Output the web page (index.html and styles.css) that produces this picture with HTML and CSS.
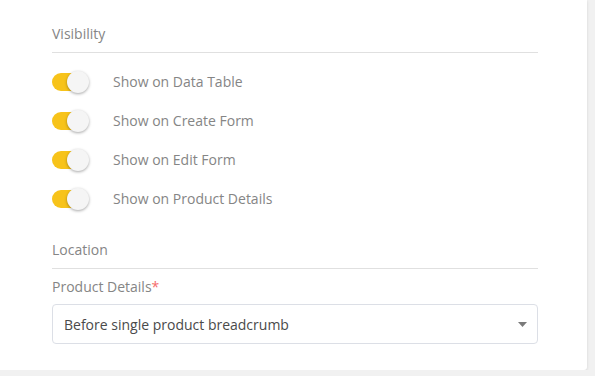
FILE: index.html
```html
<!DOCTYPE html>
<html lang="en">
<head>
    <meta charset="UTF-8">
    <title>Field settings</title>
    <link rel="stylesheet" href="styles.css">
</head>
<body>
    <div class="card">
        <h3 class="section-title">Visibility</h3>
        <div class="toggle-list">
            <label class="toggle-row">
                <span class="switch"><span class="knob"></span></span>
                <span class="toggle-label">Show on Data Table</span>
            </label>
            <label class="toggle-row">
                <span class="switch"><span class="knob"></span></span>
                <span class="toggle-label">Show on Create Form</span>
            </label>
            <label class="toggle-row">
                <span class="switch"><span class="knob"></span></span>
                <span class="toggle-label">Show on Edit Form</span>
            </label>
            <label class="toggle-row">
                <span class="switch"><span class="knob"></span></span>
                <span class="toggle-label">Show on Product Details</span>
            </label>
        </div>

        <h3 class="section-title location">Location</h3>
        <div class="field">
            <div class="field-label">Product Details<span class="required">*</span></div>
            <div class="select">
                <span>Before single product breadcrumb</span>
                <svg class="caret" width="9" height="5" viewBox="0 0 9 5"><path d="M0 0h9L4.5 5z" fill="#7a7a7a"/></svg>
            </div>
        </div>
    </div>
</body>
</html>
```

FILE: styles.css
```css
body {
    margin: 0;
    background-color: #f1f1f1;
    font-family: "Open Sans", "Liberation Sans", sans-serif;
    font-size: 14px;
}

.card {
    width: 587px;
    box-sizing: border-box;
    background-color: #fff;
    padding: 24px 49px 26px 52px;
    box-shadow: 0 1px 3px rgba(0, 0, 0, 0.12);
    border-radius: 0 0 3px 0;
}

/* section headings with a rule under them */
.section-title {
    margin: 0;
    font-size: 14px;
    font-weight: normal;
    line-height: 20px;
    color: #858585;
    padding-bottom: 8px;
    border-bottom: 1px solid #e0e0e0;
}
.section-title.location { margin-top: 30px; }

.toggle-list {
    display: flex;
    flex-direction: column;
    gap: 17px;
    margin-top: 18px;
}
.toggle-row {
    display: flex;
    align-items: center;
    height: 22px;
}
.switch {
    position: relative;
    width: 36px;
    height: 18px;
    border-radius: 9px;
    background-color: #f7c31a;
    flex-shrink: 0;
}
.knob {
    position: absolute;
    top: -2px;
    right: -1px;
    width: 22px;
    height: 22px;
    border-radius: 50%;
    background-color: #f5f5f5;
    box-shadow: 0 1px 3px rgba(0, 0, 0, 0.35);
}
.toggle-label {
    margin-left: 25px;
    color: #858585;
    line-height: 20px;
}

.field { margin-top: 8px; }
.field-label {
    color: #858585;
    line-height: 20px;
}
.required { color: #f56c6c; }

.select {
    margin-top: 7px;
    height: 40px;
    box-sizing: border-box;
    border: 1px solid #dcdfe6;
    border-radius: 4px;
    display: flex;
    align-items: center;
    justify-content: space-between;
    padding: 0 10px 0 11px;
    color: #4a4a4a;
}
.caret { margin-top: 1px; }
```
